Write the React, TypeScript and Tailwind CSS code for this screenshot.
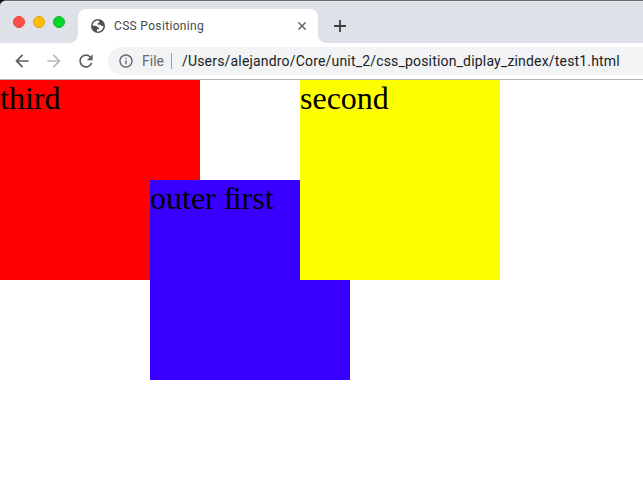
import type { ReactNode } from "react";
import { MdArrowBack, MdArrowForward, MdInfoOutline, MdRefresh } from "react-icons/md";

function GlobeIcon() {
  return (
    <svg className="size-[14px] shrink-0" viewBox="0 0 14 14">
      <circle cx="7" cy="7" r="7" fill="#4d5157" />
      <path
        d="M8.1 1.5C4.5.9 1.5 3.5 1.5 6.6l2.7.1c1.5 0 2.4.8 2.4 1.9l1.6.1v1.6H5.9v2.1c3.3.6 6.5-1.9 6.5-5.4l-1.6.1c-.5 0-.8-.5-.9-1.4H6.6V4.1h1.5z"
        fill="#fff"
      />
    </svg>
  );
}

function TabStrip() {
  return (
    <div className="flex h-[43px] rounded-tl-md border-t border-[#69696b] bg-[#dee1e8] shadow-[inset_0_1px_0_#eff0f4]">
      <div className="flex gap-2 pl-[13px] pt-[15px]">
        <span className="size-3 rounded-full border border-[#e2443f] bg-[#ff4f49]" />
        <span className="size-3 rounded-full border border-[#e0a31a] bg-[#ffbd06]" />
        <span className="size-3 rounded-full border border-[#10b52c] bg-[#04d32c]" />
      </div>
      <div className="relative ml-[13px] mt-2 flex w-[240px] items-center rounded-t-lg bg-white pl-[13px]">
        <span className="absolute -left-2 bottom-0 size-2 bg-[radial-gradient(circle_at_0_0,transparent_7.5px,white_8px)]" />
        <span className="absolute -right-2 bottom-0 size-2 bg-[radial-gradient(circle_at_100%_0,transparent_7.5px,white_8px)]" />
        <GlobeIcon />
        <span className="ml-[9px] text-xs tracking-[0.33px] text-[#45494d]">CSS Positioning</span>
        <svg className="absolute left-[220px] top-[13px] size-2" viewBox="0 0 8 8" fill="none" stroke="#5f6368" strokeWidth="1.5">
          <path d="M.4.4 7.6 7.6M7.6.4.4 7.6" />
        </svg>
      </div>
      <svg className="ml-4 mt-[19px] size-3" viewBox="0 0 12 12" fill="none" stroke="#3c4043" strokeWidth="1.8">
        <path d="M6 0v12M0 6h12" />
      </svg>
    </div>
  );
}

function Toolbar() {
  return (
    <div className="flex h-[37px] border-b border-[#b2b2b4] bg-white pt-1">
      <div className="flex h-7 w-[108px] shrink-0 items-center gap-3 pl-3 text-[#5b5f65]">
        <MdArrowBack className="size-5" />
        <MdArrowForward className="size-5 text-[#b9babd]" />
        <MdRefresh className="size-5" />
      </div>
      <div className="flex h-7 flex-1 items-center rounded-l-full bg-[#f1f3f4] pl-2.5 text-sm">
        <MdInfoOutline className="size-4 text-[#5f6368]" />
        <span className="ml-2 w-[23px] text-[#65696e]">File</span>
        <span className="ml-[6px] h-4 w-px bg-[#9b9ea2]" />
        <span className="ml-2.5 whitespace-nowrap tracking-[0.18px] text-[#202124]">
          /Users/alejandro/Core/unit_2/css_position_diplay_zindex/test1.html
        </span>
      </div>
    </div>
  );
}

function Box({ className, children }: { className: string; children: ReactNode }) {
  return <div className={`absolute size-[200px] ${className}`}>{children}</div>;
}

export default function App() {
  return (
    <div className="flex h-[489px] w-[643px] flex-col overflow-hidden bg-white font-[Roboto,sans-serif]">
      <div className="bg-[#111113]">
        <TabStrip />
      </div>
      <Toolbar />
      <main className="relative flex-1 font-['Liberation_Serif',serif] text-[32px] leading-[37px] text-black">
        <Box className="left-0 top-0 bg-[#ff0000]">third</Box>
        <Box className="left-[150px] top-[100px] bg-[#3900ff]">
          outer <span className="tracking-[-1.7px]">f</span>irst
        </Box>
        <Box className="left-[300px] top-0 bg-[#fdff00]">second</Box>
      </main>
    </div>
  );
}
